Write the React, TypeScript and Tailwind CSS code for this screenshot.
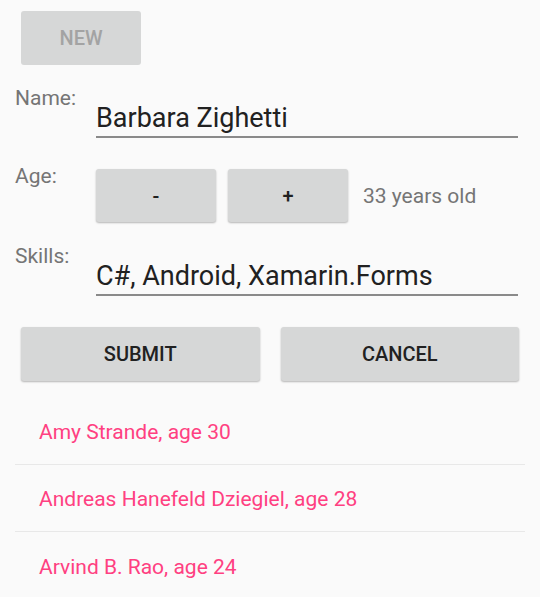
import React from "react";

const btn =
  "bg-[#d6d7d7] rounded-[3px] flex items-center justify-center font-medium text-[20px]";
const raised = "shadow-[0_1px_2px_rgba(0,0,0,0.28)]";

export default function App() {
  const people = [
    "Amy Strande, age 30",
    "Andreas Hanefeld Dziegiel, age 28",
    "Arvind B. Rao, age 24",
  ];
  return (
    <div
      className="w-[540px] h-[597px] bg-[#fafafa] overflow-hidden flex flex-col"
      style={{ fontFamily: "Roboto, 'Noto Sans', sans-serif" }}
    >
      <div className="pt-[11px] pl-[21px]">
        <div className={`${btn} w-[120px] h-[54px] text-[#a3a3a3]`}>NEW</div>
      </div>

      <div className="flex pl-[15px] pr-[22px] mt-[19px]">
        <div className="w-[81px] text-[21px] text-[#757575] leading-[28px]">Name:</div>
        <div className="flex-1 mt-[16px] border-b-2 border-[#8a8a8a] h-[38px] text-[27px] leading-[36px] text-[#212121]">
          Barbara Zighetti
        </div>
      </div>

      <div className="flex pl-[15px] mt-[24px]">
        <div className="w-[81px] text-[21px] text-[#757575] leading-[28px]">Age:</div>
        <div className="flex items-center gap-[12px] mt-[7px]">
          <div className={`${btn} ${raised} w-[120px] h-[53px] text-[#212121]`}>-</div>
          <div className={`${btn} ${raised} w-[120px] h-[53px] text-[#212121]`}>+</div>
          <div className="ml-[3px] mt-[3px] text-[21px] text-[#757575]">33 years old</div>
        </div>
      </div>

      <div className="flex pl-[15px] pr-[22px] mt-[20px]">
        <div className="w-[81px] text-[21px] text-[#757575] leading-[28px]">Skills:</div>
        <div className="flex-1 mt-[16px] border-b-2 border-[#8a8a8a] h-[38px] text-[27px] leading-[36px] text-[#212121]">
          C#, Android, Xamarin.Forms
        </div>
      </div>

      <div className="flex gap-[21px] pl-[21px] pr-[21px] mt-[31px]">
        <div className={`${btn} ${raised} flex-1 h-[54px] text-[#212121]`}>SUBMIT</div>
        <div className={`${btn} ${raised} flex-1 h-[54px] text-[#212121]`}>CANCEL</div>
      </div>

      <div className="mx-[15px] mt-[17px]">
        {people.map((p, i) => (
          <div
            key={p}
            className={`h-[67px] flex items-center pl-[24px] pt-[4px] text-[21px] text-[#ff4081] ${
              i < people.length - 1 ? "border-b border-[#e8e8e8]" : ""
            }`}
          >
            {p}
          </div>
        ))}
      </div>
    </div>
  );
}
